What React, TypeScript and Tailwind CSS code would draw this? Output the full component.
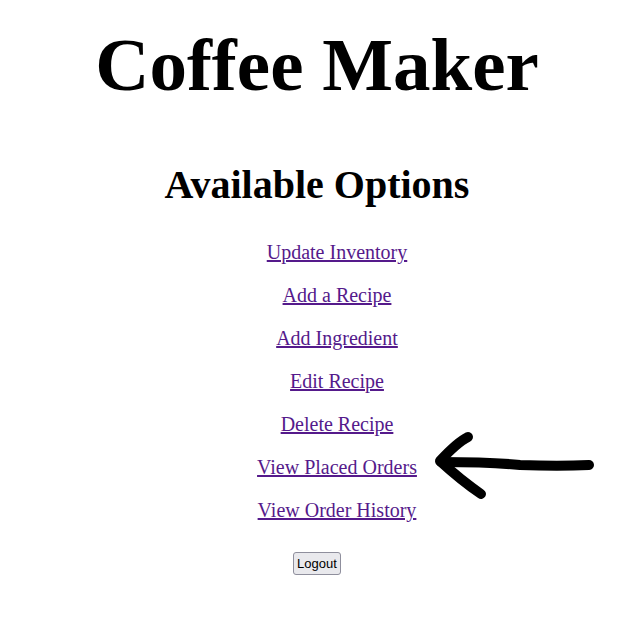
const options = [
  "Update Inventory",
  "Add a Recipe",
  "Add Ingredient",
  "Edit Recipe",
  "Delete Recipe",
  "View Placed Orders",
  "View Order History",
]

export default function App() {
  return (
    <div className="relative min-h-[632px] w-[624px] bg-white pl-[10px] text-center font-['Liberation_Serif',serif] text-black">
      <h1 className="pt-[22px] text-[75px] leading-[86px] font-bold">Coffee Maker</h1>

      <h2 className="mt-[54px] text-[40px] leading-[46px] font-bold">Available Options</h2>

      {/* links sit a bit right of the headings, like a default ul indent */}
      <ul className="mt-[33px] flex flex-col gap-5 pl-10">
        {options.map((o) => (
          <li key={o} className="text-[20px] leading-[23px]">
            <a href="#" className="text-[#551a8b] underline">
              {o}
            </a>
          </li>
        ))}
      </ul>

      <div className="mt-[29px]">
        <button className="rounded-[3px] border border-[#8f8f9d] bg-[#e9e9ed] px-[3px] py-[3px] font-['Liberation_Sans',Arial,sans-serif] text-[13px] leading-[15px] text-black">
          Logout
        </button>
      </div>

      {/* hand-drawn arrow annotation */}
      <svg
        className="pointer-events-none absolute top-0 left-0"
        width="624"
        height="632"
        viewBox="0 0 624 632"
        fill="none"
      >
        <path
          d="M589 465 C 570 466, 545 466, 520 465 C 500 463, 480 462, 441 462"
          stroke="black"
          strokeWidth="10"
          strokeLinecap="round"
          strokeLinejoin="round"
        />
        <path
          d="M468 437 C 460 441, 452 448, 440 461 C 452 472, 468 485, 481 494"
          stroke="black"
          strokeWidth="10"
          strokeLinecap="round"
          strokeLinejoin="round"
        />
      </svg>
    </div>
  )
}
